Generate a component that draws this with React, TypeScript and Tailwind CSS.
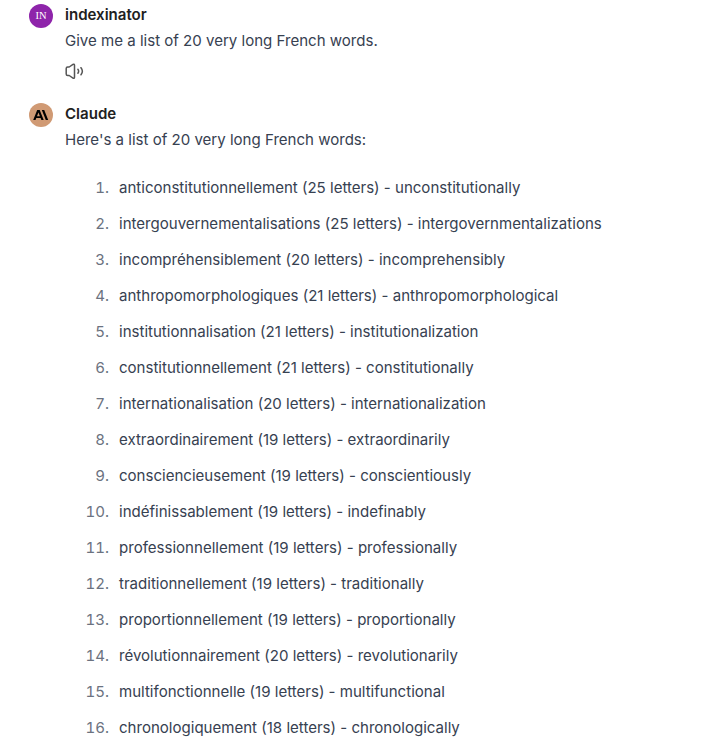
const items = [
  'anticonstitutionnellement (25 letters) - unconstitutionally',
  'intergouvernementalisations (25 letters) - intergovernmentalizations',
  'incompréhensiblement (20 letters) - incomprehensibly',
  'anthropomorphologiques (21 letters) - anthropomorphological',
  'institutionnalisation (21 letters) - institutionalization',
  'constitutionnellement (21 letters) - constitutionally',
  'internationalisation (20 letters) - internationalization',
  'extraordinairement (19 letters) - extraordinarily',
  'consciencieusement (19 letters) - conscientiously',
  'indéfinissablement (19 letters) - indefinably',
  'professionnellement (19 letters) - professionally',
  'traditionnellement (19 letters) - traditionally',
  'proportionnellement (19 letters) - proportionally',
  'révolutionnairement (20 letters) - revolutionarily',
  'multifonctionnelle (19 letters) - multifunctional',
  'chronologiquement (18 letters) - chronologically',
];

function SpeakerIcon() {
  return (
    <svg width="19" height="19" viewBox="0 0 19 19" fill="none" stroke="#555" strokeWidth="1.5" strokeLinecap="round" strokeLinejoin="round">
      <path d="M1.2 6.5v5.500c0 1 .5 1.500 1.500 1.500h1.500l3.800 2.600c.7.5 1.500.1 1.500-.8V3.200c0-.9-.8-1.300-1.500-.8L4.200 5H2.700c-1 0-1.500.5-1.500 1.500z" />
      <path d="M12.900 7.300c.9 1.200.9 2.700 0 3.900M16 5.700c1.700 2.200 1.700 4.900 0 7.100" />
    </svg>
  );
}

function ClaudeMark() {
  return (
    <svg width="16" height="10" viewBox="0 0 16 10" fill="#000">
      <path fillRule="evenodd" d="M4.200 0h2.500L10.700 10H8.400l-.8-2H3.300L2.500 10H.2zM4 6.200h2.900L5.450 2.400z" />
      <path d="M8.800 0h2.400L15.200 10h-2.400z" />
    </svg>
  );
}

export default function App() {
  return (
    <main className="h-[744px] overflow-hidden bg-white pl-[29px] font-['Inter',sans-serif] text-[15.06px] text-[#374151]">
      <section className="flex h-[99px] gap-3 pt-[3px]">
        <div className="mt-px flex size-6 shrink-0 items-center justify-center rounded-full bg-[#8e24aa] font-['Liberation_Serif',serif] text-[10.5px] text-white">IN</div>
        <div>
          <h2 className="h-6 font-semibold leading-6 text-[#212121]">indexinator</h2>
          <p className="mt-0.5 leading-6">Give me a list of 20 very long French words.</p>
          <div className="mt-[9px]"><SpeakerIcon /></div>
        </div>
      </section>
      <section className="flex gap-3 pt-[3px]">
        <div className="mt-px flex size-6 shrink-0 items-center justify-center rounded-full bg-[#d09a74]"><ClaudeMark /></div>
        <div>
          <h2 className="h-6 font-semibold leading-6 text-[#212121]">Claude</h2>
          <p className="mt-0.5 leading-6">Here's a list of 20 very long French words:</p>
          <ol className="mt-6">
            {items.map((item, index) => (
              <li key={item} className="flex h-9 items-start leading-6">
                <span className="w-11 shrink-0 text-right tabular-nums text-[#6b7280]">{index + 1}.</span>
                <span className="ml-2.5 whitespace-nowrap">{item}</span>
              </li>
            ))}
          </ol>
        </div>
      </section>
    </main>
  );
}
